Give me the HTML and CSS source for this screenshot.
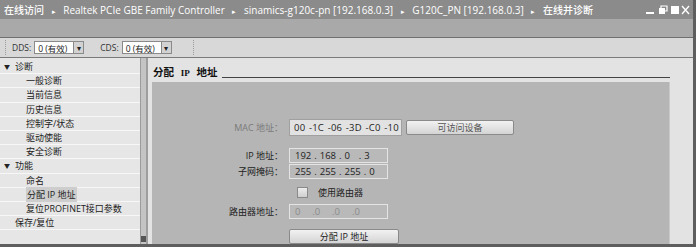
FILE: index.html
```html
<!DOCTYPE html>
<html>
<head>
    <meta charset="utf-8">
    <title>在线并诊断</title>
    <link rel="stylesheet" href="styles.css">
</head>
<body>
    <div class="window">
        <div class="titlebar">
            <span class="path">在线访问 <i>▸</i> Realtek PCIe GBE Family Controller <i>▸</i> sinamics-g120c-pn [192.168.0.3] <i>▸</i> G120C_PN [192.168.0.3] <i>▸</i> 在线并诊断</span>
            <span class="winbtns">
                <svg width="46" height="10" viewBox="0 0 46 10">
                    <rect x="1" y="7" width="8" height="2" fill="#fff"/>
                    <rect x="14" y="3" width="6" height="6" fill="#fff"/>
                    <path d="M16 3 V1 H22 V6 H20" fill="none" stroke="#fff" stroke-width="1.2"/>
                    <rect x="26" y="1" width="8" height="8" fill="#fff"/>
                    <path d="M37 1 L44 9 M44 1 L37 9" stroke="#fff" stroke-width="1.4"/>
                </svg>
            </span>
        </div>
        <div class="band"></div>
        <div class="toolbar">
            <span class="sep"></span>
            <label class="tlabel">DDS:</label>
            <span class="select">0 (有效)<b class="arrow">▾</b></span>
            <label class="tlabel">CDS:</label>
            <span class="select">0 (有效)<b class="arrow">▾</b></span>
            <span class="sep"></span>
        </div>
        <div class="main">
            <div class="tree">
                <div class="row lvl0"><span class="tri">▼</span>诊断</div>
                <div class="row lvl1">一般诊断</div>
                <div class="row lvl1">当前信息</div>
                <div class="row lvl1">历史信息</div>
                <div class="row lvl1">控制字/状态</div>
                <div class="row lvl1">驱动使能</div>
                <div class="row lvl1">安全诊断</div>
                <div class="row lvl0"><span class="tri">▼</span>功能</div>
                <div class="row lvl1">命名</div>
                <div class="row lvl1"><span class="sel">分配 IP 地址</span></div>
                <div class="row lvl1">复位PROFINET接口参数</div>
                <div class="row lvl0 noicon">保存/复位</div>
            </div>
            <div class="scroll"><span class="thumb"></span></div>
            <div class="content">
                <div class="heading"><h3>分配 <span class="ip-tag">IP</span> 地址</h3><span class="rule"></span></div>
                <div class="panel">
                    <div class="frow mac">
                        <span class="flabel dim">MAC 地址：</span>
                        <span class="field wide">00 -1C -06 -3D -C0 -10</span>
                        <span class="btn">可访问设备</span>
                    </div>
                    <div class="frow ip-row">
                        <span class="flabel">IP 地址：</span>
                        <span class="field">192 . 168 . 0 &nbsp; . 3</span>
                    </div>
                    <div class="frow">
                        <span class="flabel">子网掩码：</span>
                        <span class="field">255 . 255 . 255 . 0</span>
                    </div>
                    <div class="frow chk">
                        <span class="box"></span>
                        <span>使用路由器</span>
                    </div>
                    <div class="frow">
                        <span class="flabel">路由器地址：</span>
                        <span class="field dimtext">0 &nbsp; &nbsp;.0 &nbsp; &nbsp;.0 &nbsp; &nbsp;.0</span>
                    </div>
                    <div class="frow assign">
                        <span class="btn big">分配 IP 地址</span>
                    </div>
                </div>
            </div>
        </div>
    </div>
</body>
</html>
```

FILE: styles.css
```css
body {
    margin: 0;
    font-family: "Open Sans", "Noto Sans CJK SC", sans-serif;
    font-size: 9px;
    color: #222;
}
.window {
    width: 696px;
    height: 247px;
    box-sizing: border-box;
    border-right: 3px solid #5e5e5e;
    border-bottom: 3px solid #5e5e5e;
    background: #e3e3e3;
    display: flex;
    flex-direction: column;
    overflow: hidden;
}
.titlebar {
    height: 19px;
    background: #8b8b8b;
    color: #fff;
    display: flex;
    align-items: center;
    justify-content: space-between;
    padding: 0 0 0 4px;
    font-size: 10px;
    font-weight: 500;
}
.titlebar i {
    font-style: normal;
    font-size: 7px;
    margin: 0 5px;
}
.winbtns {
    display: flex;
    margin-right: 2px;
}
.band {
    height: 18px;
    background: #a9a9a9;
    border-bottom: 1px solid #707070;
}
.toolbar {
    height: 19px;
    background: #d8d8d8;
    border-bottom: 1px solid #7a7a7a;
    display: flex;
    align-items: center;
    font-size: 8.5px;
}
.sep {
    width: 0;
    height: 15px;
    border-left: 1px dotted #9a9a9a;
    margin: 0 6px 0 5px;
}
.tlabel {
    margin-right: 3px;
    color: #333;
}
.select {
    display: flex;
    align-items: center;
    width: 50px;
    height: 13px;
    box-sizing: border-box;
    background: #fff;
    border: 1px solid #8a8a8a;
    padding-left: 3px;
    position: relative;
    margin-right: 16px;
    font-size: 8.5px;
}
.arrow {
    position: absolute;
    right: 0;
    top: 0;
    width: 9px;
    height: 11px;
    background: #d2d2d2;
    border-left: 1px solid #8a8a8a;
    font-size: 8px;
    line-height: 11px;
    text-align: center;
    font-weight: normal;
}
.main {
    flex: 1;
    display: flex;
    min-height: 0;
}
.tree {
    width: 140px;
    background: #e6e6e6;
    padding-top: 2px;
    border-right: 1px solid #9c9c9c;
}
.row {
    height: 13.2px;
    line-height: 13.2px;
    border-bottom: 1px solid #f7f7f7;
    font-size: 9px;
    color: #222;
    white-space: nowrap;
}
.lvl0 {
    padding-left: 4px;
}
.noicon {
    padding-left: 15px;
}
.tri {
    font-size: 6px;
    margin-right: 5px;
    vertical-align: 1px;
}
.lvl1 {
    padding-left: 26px;
}
.sel {
    background: #cdcdcd;
    padding: 1px 1px;
}
.scroll {
    width: 5px;
    background: #c4c4c4;
    border-right: 2px solid #9e9e9e;
    position: relative;
}
.thumb {
    position: absolute;
    left: 0;
    bottom: 2px;
    width: 5px;
    height: 6px;
    background: #555;
}
.content {
    flex: 1;
    padding: 0 23px 0 4px;
    display: flex;
    flex-direction: column;
}
.heading {
    display: flex;
    align-items: flex-end;
    height: 22px;
    padding-left: 1px;
}
.heading h3 {
    margin: 0;
    font-size: 10.5px;
    font-weight: 700;
    line-height: 14px;
    color: #111;
}
.ip-tag {
    font-family: "Liberation Serif", serif;
    font-size: 9px;
    margin: 0 4px;
}
.rule {
    flex: 1;
    height: 0;
    border-bottom: 1px solid #444;
    margin: 0 0 2px 5px;
}
.panel {
    flex: 1;
    margin-top: 2px;
    background: #b5b5b5;
    border-right: 1px solid #c9c9c9;
    padding-top: 37px;
}
.frow {
    display: flex;
    align-items: center;
    height: 16px;
}
.flabel {
    width: 131px;
    text-align: right;
    margin-right: 6px;
    font-size: 9px;
    color: #222;
}
.dim {
    color: #7a7a7a;
}
.field {
    width: 99px;
    height: 15px;
    box-sizing: border-box;
    border: 1px solid #e4e4e4;
    background: #b9b9b9;
    padding-left: 5px;
    line-height: 13px;
    font-size: 9.5px;
    word-spacing: 0.5px;
    color: #222;
    white-space: nowrap;
    overflow: hidden;
}
.field.wide {
    width: 113px;
    height: 17px;
    line-height: 15px;
    background: #e2e2e2;
    border-color: #a0a0a0;
    padding-left: 4px;
    word-spacing: 1px;
    letter-spacing: 0.2px;
}
.dimtext {
    color: #8c8c8c;
}
.btn {
    display: inline-block;
    width: 108px;
    height: 15px;
    box-sizing: border-box;
    border: 1px solid #8a8a8a;
    border-radius: 2px;
    background: linear-gradient(#f2f2f2, #d4d4d4);
    text-align: center;
    line-height: 13px;
    font-size: 9px;
    color: #555;
    margin-left: 4px;
}
.mac {
    height: 17px;
}
.ip-row {
    margin-top: 11px;
}
.chk {
    margin-top: 8px;
    padding-left: 145px;
    height: 11px;
}
.box {
    width: 9px;
    height: 9px;
    border: 1px solid #8a8a8a;
    background: linear-gradient(#ececec, #cfcfcf);
    margin-right: 10px;
}
.chk + .frow {
    margin-top: 5px;
}
.assign {
    margin-top: 9px;
    padding-left: 137px;
}
.btn.big {
    margin-left: 0;
    width: 110px;
    color: #222;
}
```
